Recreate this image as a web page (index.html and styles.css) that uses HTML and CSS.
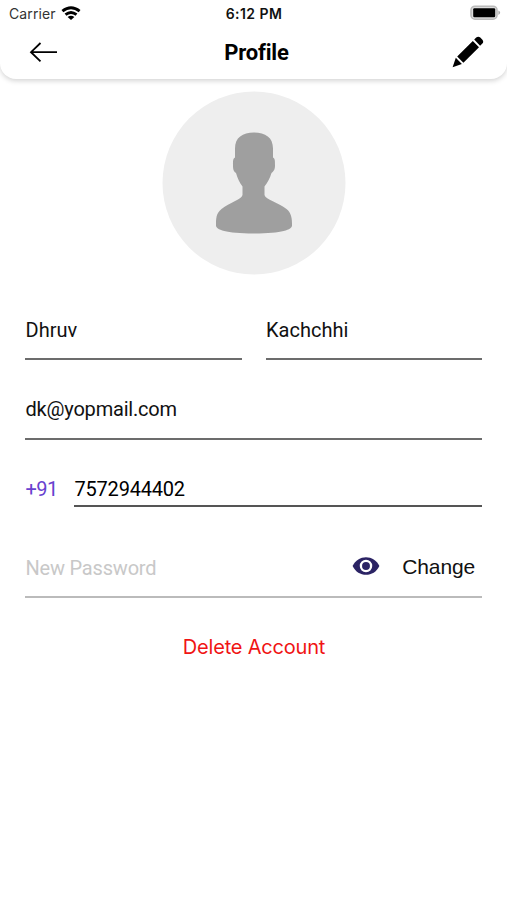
FILE: index.html
```html
<!DOCTYPE html>
<html lang="en">
<head>
<meta charset="utf-8">
<title>Profile</title>
<link rel="stylesheet" href="styles.css">
</head>
<body>
<header class="header">
  <div class="status">
    <div class="carrier"><span class="carrier-name">Carrier</span>
      <svg class="wifi" width="20" height="15" viewBox="0 0 20 15"><g fill="none" stroke="#000" stroke-width="2.9"><path d="M1.4 5.2Q10 -1.6 18.6 5.2"/><path d="M4.5 8.6Q10 4.3 15.5 8.6"/></g><path d="M6.6 10.9Q10 8.4 13.4 10.9L10 14.1Z"/></svg>
    </div>
    <span class="clock">6:12 PM</span>
    <svg class="battery" width="32" height="16" viewBox="0 0 32 16"><rect x="1" y="1.2" width="26" height="13" rx="4" fill="#ddd" stroke="#bbb" stroke-width="1.6"/><rect x="3.2" y="3.2" width="22" height="9" rx="1.2"/><path d="M28.4 5.5Q32 7.7 28.4 10Z" fill="#aaa"/></svg>
  </div>
  <div class="nav">
    <svg class="back" width="30" height="24" viewBox="0 0 30 24" fill="none" stroke="#000" stroke-width="1.8"><path d="M29 12.2H3M12.5 3L3 12.2L12.5 21.3"/></svg>
    <h1 class="title">Profile</h1>
    <svg class="edit" width="32" height="32" viewBox="0 0 32 32"><path d="M22.2 3.6L24.2 1.6Q26.2-.2 28.3 1.6L30.4 3.7Q32 5.7 30.4 7.4L28.1 9.7ZM20.8 5L27 11.2L11.4 26.8L5.2 20.6ZM3.8 21.7L9.9 27.9L.6 31.2Z"/></svg>
  </div>
</header>
<main class="content">
  <div class="avatar">
    <svg width="183" height="183" viewBox="0 0 183 183"><path fill="#9f9f9f" d="M72.5 64V57C72.5 46 80 41 91.5 41S110.5 46 110.5 57V66C112.5 67 112.5 69 112.5 74C112.5 79 110.5 80 109 81.5C107.500 87 105 91 102 95V103.500C103 108 116 111 124 117.500C129 121.500 129.500 127 129.500 134C129.500 138 120 142 91.500 142S53.500 138 53.500 134C53.500 127 53.500 122 59 117.500C67 111 79 108 80 103.500V95C77 91 75 87 73.500 81.500C71.500 80 70.500 79 70.500 74C70.500 69 70.500 67 72.500 66Z"/></svg>
  </div>
  <div class="names">
    <div class="field"><span class="first">Dhruv</span></div>
    <div class="field"><span class="last">Kachchhi</span></div>
  </div>
  <div class="field email"><span>dk@yopmail.com</span></div>
  <div class="phone"><span class="code">+91</span><div class="number"><span>7572944402</span></div></div>
  <div class="password">
    <span class="placeholder">New Password</span>
    <svg class="eye" width="28" height="20" viewBox="0 0 28 20"><path fill="#2b2364" d="M.6 10C6-1.800 22-1.800 27.400 10C22 21.800 6 21.800 .6 10Z"/><circle cx="14" cy="10" r="5.100" fill="#2b2364" stroke="#fff" stroke-width="2.300"/></svg>
    <span class="change">Change</span>
  </div>
  <div class="delete">Delete Account</div>
</main>
</body>
</html>
```
FILE: styles.css
```css
* { box-sizing: border-box; }
body { margin: 0; background: #fff; color: #111; font-family: Roboto, sans-serif; font-size: 20px; line-height: 24px; }
.header { height: 79px; border-radius: 0 0 16px 16px; background: #fff; box-shadow: 0 2px 5px rgba(0,0,0,.17); }
.status { height: 27px; padding: 0 8px 0 9px; display: grid; grid-template-columns: 1fr auto 1fr; align-items: center; font-family: Inter, sans-serif; font-size: 14px; line-height: 18px; }
.carrier { display: flex; align-items: center; gap: 5px; color: #333; letter-spacing: .1px; }
.wifi { margin-top: -1px; }
.clock { font-weight: 600; font-size: 14px; letter-spacing: .45px; color: #111; }
.battery { justify-self: end; margin-right: -3px; margin-top: -1px; }
.nav { height: 52px; padding: 0 23px 2px 28px; display: grid; grid-template-columns: 1fr auto 1fr; align-items: center; }
.title { margin: 1px -1px 0 0; font-size: 22px; line-height: 26px; letter-spacing: -.2px; font-weight: 700; color: #000; }
.edit { justify-self: end; }
.content { padding: 12px 25px 0; }
.avatar { width: 183px; height: 183px; margin: 0 auto; border-radius: 50%; background: #eee; transform: translate(.5px, .5px); }
.avatar svg { display: block; }
.names { display: grid; grid-template-columns: 1fr 1fr; gap: 24px; margin-top: 44px; }
.field { height: 42px; padding-left: .5px; border-bottom: 2px solid #6c6c6c; }
.email { height: 43px; margin-top: 37px; letter-spacing: -.2px; }
.phone { display: flex; margin-top: 36px; height: 31px; letter-spacing: -.2px; }
.code { width: 49px; padding: 1px 0 0 .5px; color: #6842cf; letter-spacing: -.6px; }
.number { flex: 1; padding: 1px 0 0 .5px; border-bottom: 2px solid #555; color: #000; }
.password { display: flex; align-items: flex-start; height: 43px; margin-top: 48px; border-bottom: 2px solid #bbb; }
.placeholder { flex: 1; padding: 1px 0 0 .5px; letter-spacing: -.2px; color: #c8c8c8; }
.eye { margin: 1px 22px 0 0; }
.change { margin: 1px 7px 0 0; font: 21px/22px "Liberation Sans", sans-serif; letter-spacing: -.15px; color: #111; }
.delete { margin-top: 37px; text-align: center; font-family: Inter, sans-serif; font-size: 20px; letter-spacing: -.2px; padding-left: 1px; color: #f01414; }
```
